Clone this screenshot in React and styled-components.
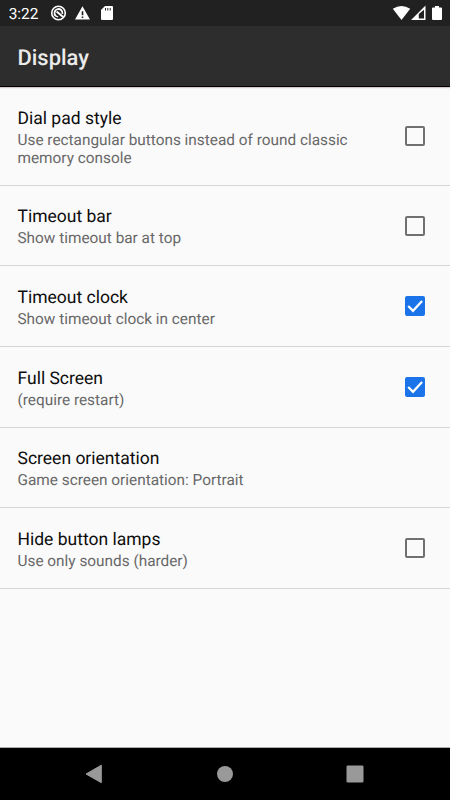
import React, { useState } from "react";
import styled, { createGlobalStyle } from "styled-components";

const GlobalStyle = createGlobalStyle`
  * { box-sizing: border-box; }
  body { margin: 0; background: #fafafa; font-family: Roboto, "Liberation Sans", sans-serif; text-rendering: geometricPrecision; }
`;

const Screen = styled.div`
  display: flex;
  flex-direction: column;
  width: 450px;
  height: 800px;
  overflow: hidden;
  background: #fafafa;
`;

const StatusBar = styled.header`
  display: flex;
  flex: none;
  justify-content: space-between;
  height: 26px;
  padding-left: 8.7px;
  background: #212121;
  color: #fff;
`;

const StatusGroup = styled.div`
  display: flex;
  align-items: center;
`;

const Time = styled.span`
  width: 39.3px;
  padding-top: 2px;
  font-size: 15.4px;
  line-height: 26px;
`;

const Toolbar = styled.div`
  display: flex;
  flex: none;
  align-items: center;
  height: 61px;
  padding: 5px 17.5px 0;
  background: #2d2d2d;
  border-bottom: 1px solid #000;
  box-shadow: 0 1px 1px rgba(50, 0, 30, 0.2);
`;

const ToolbarTitle = styled.h1`
  margin: 0;
  color: #ebebeb;
  font-size: 21.9px;
  font-weight: 500;
  line-height: 28px;
`;

const List = styled.main`
  flex: 1;
  border-bottom: 1px solid #aaa;
`;

const Row = styled.div`
  display: flex;
  align-items: center;
  height: ${(p) => p.$height}px;
  padding: 0 25px 0 17.5px;
  border-bottom: 1px solid #d5d5d5;
`;

const Labels = styled.div`
  flex: 1;
  align-self: flex-start;
  padding: ${(p) => (p.$compact ? 20 : 21)}px 40px 0 0;
`;

const Title = styled.div`
  color: #0c0c0c;
  font-size: 17.5px;
  line-height: 22px;
`;

const Summary = styled.div`
  color: #686868;
  font-size: 15.36px;
  line-height: 18px;
  padding-top: 1px;
`;

const Box = styled.button`
  display: flex;
  flex: none;
  width: 20px;
  height: 20px;
  padding: 0;
  border: ${(p) => (p.$on ? "0" : "2px solid #707070")};
  border-radius: 2px;
  background: ${(p) => (p.$on ? "#1a73e8" : "transparent")};
`;

const NavBar = styled.nav`
  display: grid;
  flex: none;
  grid-template-columns: 30px 30px 30px;
  gap: 100px;
  justify-content: center;
  align-items: center;
  justify-items: center;
  height: 52px;
  background: #000;
`;

const items = [
  { title: "Dial pad style", summary: "Use rectangular buttons instead of round classic memory console", on: false, height: 99 },
  { title: "Timeout bar", summary: "Show timeout bar at top", on: false, height: 80 },
  { title: "Timeout clock", summary: "Show timeout clock in center", on: true, height: 81 },
  { title: "Full Screen", summary: "(require restart)", on: true, height: 81 },
  { title: "Screen orientation", summary: "Game screen orientation: Portrait", height: 80 },
  { title: "Hide button lamps", summary: "Use only sounds (harder)", on: false, height: 81 },
];

const StatusIcons = () => (
  <svg width="66" height="26" viewBox="48 0 66 26" fill="#fff">
    <circle cx="58.5" cy="13" r="6.8" fill="none" stroke="#fff" strokeWidth="1.6" />
    <path d="M55.8 16A4 4 0 1 1 62.4 13.8" fill="none" stroke="#fff" strokeWidth="1.8" />
    <path d="M56.6 11.6L63.2 17" stroke="#fff" strokeWidth="2" />
    <path d="M55.6 15.8l2.6 1.2" stroke="#fff" strokeWidth="1.3" />
    <path d="M82.5 6.3L90 19.5H75z" />
    <path d="M81.7 11.2h1.6v4h-1.6zM81.7 16.4h1.6V18h-1.6z" fill="#212121" />
    <path d="M105 6h7q1 0 1 1v12q0 1-1 1h-10q-1 0-1-1v-9z" />
    <path d="M105.5 8v2.5M107.8 8v2.5M110.2 8v2.5" stroke="#212121" strokeWidth="1" />
  </svg>
);

const SignalIcons = () => (
  <svg width="58" height="26" viewBox="392 0 58 26" fill="#fff">
    <path d="M392.8 8.8Q401.5 3.2 410.2 8.8L401.5 20z" />
    <path fillRule="evenodd" d="M425.5 5.5V20H411zM424 9.8L418.8 14V18.5H424z" />
    <path d="M435 6h4v1.5h2q1 0 1 1V19q0 1-1 1h-8q-1 0-1-1V8.5q0-1 1-1h2z" />
  </svg>
);

function Checkbox({ initial }) {
  const [on, setOn] = useState(initial);
  return (
    <Box $on={on} role="checkbox" aria-checked={on} onClick={() => setOn(!on)}>
      {on && (
        <svg width="20" height="20" viewBox="0 0 20 20">
          <path d="M3.2 10l4.8 4.8L17.1 5" fill="none" stroke="#fff" strokeWidth="2.2" />
        </svg>
      )}
    </Box>
  );
}

export default function App() {
  return (
    <Screen>
      <GlobalStyle />
      <StatusBar>
        <StatusGroup>
          <Time>3:22</Time>
          <StatusIcons />
        </StatusGroup>
        <SignalIcons />
      </StatusBar>
      <Toolbar>
        <ToolbarTitle>Display</ToolbarTitle>
      </Toolbar>
      <List>
        {items.map((item) => (
          <Row key={item.title} $height={item.height}>
            <Labels $compact={item.height === 80}>
              <Title>{item.title}</Title>
              <Summary>{item.summary}</Summary>
            </Labels>
            {item.on !== undefined && <Checkbox initial={item.on} />}
          </Row>
        ))}
      </List>
      <NavBar>
        <svg width="20" height="20" viewBox="0 0 20 20"><path d="M16.3 1.2V18.7L1 10z" fill="#999" stroke="#999" strokeLinejoin="round" /></svg>
        <svg width="18" height="18"><circle cx="9" cy="9" r="8" fill="#999" /></svg>
        <svg width="18" height="18"><rect x="0.5" y="0.5" width="17" height="17" rx="1.3" fill="#999" /></svg>
      </NavBar>
    </Screen>
  );
}
